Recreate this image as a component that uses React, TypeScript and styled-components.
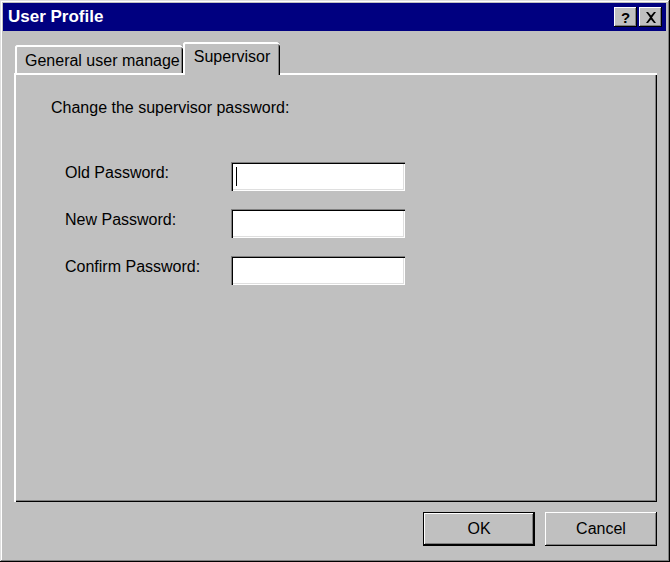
import React from 'react';
import styled, { createGlobalStyle } from 'styled-components';

const palette = {
  face: '#c0c0c0',
  light: '#dfdfdf',
  white: '#ffffff',
  shadow: '#808080',
  dark: '#000000',
  title: '#000080',
};

const GlobalStyle = createGlobalStyle`
  html, body {
    margin: 0;
    padding: 0;
    background: ${palette.face};
  }
  * {
    box-sizing: border-box;
  }
  body {
    font-family: "Liberation Sans", Arial, sans-serif;
    font-size: 15px;
    color: #000;
  }
`;

const fields = ['Old Password:', 'New Password:', 'Confirm Password:'];

const App: React.FC = () => (
  <>
    <GlobalStyle />
    <Window>
      <TitleBar>
        <Title>User Profile</Title>
        <TitleButtons>
          <TitleButton aria-label="help">
            <HelpGlyph>?</HelpGlyph>
          </TitleButton>
          <TitleButton aria-label="close">
            <svg width="12" height="11" viewBox="0 0 12 11">
              <path d="M1 0h2l3 3.5L9 0h2L7 5.5 11 11H9L6 7.5 3 11H1l4-5.5z" fill="#000" />
            </svg>
          </TitleButton>
        </TitleButtons>
      </TitleBar>
      <Body>
        <Tabs>
          <Tab>General user manage</Tab>
          <Tab active>Supervisor</Tab>
        </Tabs>
        <Panel>
          <Intro>Change the supervisor password:</Intro>
          <FieldGrid>
            {fields.map((label, i) => (
              <React.Fragment key={label}>
                <FieldLabel>{label}</FieldLabel>
                <TextBox>{i === 0 && <Caret />}</TextBox>
              </React.Fragment>
            ))}
          </FieldGrid>
        </Panel>
        <Actions>
          <PushButton isDefault>OK</PushButton>
          <PushButton>Cancel</PushButton>
        </Actions>
      </Body>
    </Window>
  </>
);

const Window = styled.div`
  width: 670px;
  height: 562px;
  display: flex;
  flex-direction: column;
  padding: 3px 4px 4px 3px;
  background: ${palette.face};
  box-shadow:
    inset -1px -1px ${palette.dark},
    inset 1px 1px ${palette.light},
    inset -2px -2px ${palette.shadow},
    inset 2px 2px ${palette.white};
`;

const TitleBar = styled.div`
  display: flex;
  align-items: center;
  justify-content: space-between;
  height: 28px;
  padding: 0 4px 0 5px;
  background: ${palette.title};
`;

const Title = styled.div`
  color: ${palette.white};
  font-weight: bold;
  font-size: 17px;
`;

const TitleButtons = styled.div`
  display: flex;
  gap: 2px;
`;

const TitleButton = styled.div`
  width: 23px;
  height: 20px;
  display: flex;
  align-items: center;
  justify-content: center;
  background: ${palette.face};
  box-shadow:
    inset -1px -1px ${palette.dark},
    inset 1px 1px ${palette.white},
    inset -2px -2px ${palette.shadow};
`;

const HelpGlyph = styled.span`
  font-weight: bold;
  font-size: 15px;
  line-height: 1;
`;

const Body = styled.div`
  flex: 1;
  display: flex;
  flex-direction: column;
  padding: 11px 9px 12px 11px;
`;

const Tabs = styled.div`
  display: flex;
  align-items: flex-end;
  padding-left: 1px;
  height: 31px;
  position: relative;
  z-index: 1;
`;

const Tab = styled.div<{ active?: boolean }>`
  height: ${({ active }) => (active ? '33px' : '28px')};
  margin-bottom: ${({ active }) => (active ? '-2px' : '0')};
  padding: ${({ active }) => (active ? '6px 10px 0 11px' : '7px 3px 0 10px')};
  background: ${palette.face};
  border-radius: 3px 3px 0 0;
  box-shadow:
    inset 2px 0 ${palette.white},
    inset 0 2px ${palette.white},
    inset -1px 0 ${palette.dark},
    inset -2px 0 ${palette.shadow};
  font-size: 16px;
  white-space: nowrap;
`;

const Panel = styled.div`
  flex: 1;
  display: flex;
  flex-direction: column;
  padding: 26px 20px 0 37px;
  background: ${palette.face};
  box-shadow:
    inset 2px 2px ${palette.white},
    inset -1px -1px ${palette.dark},
    inset -2px -2px ${palette.shadow};
`;

const Intro = styled.div`
  font-size: 16px;
  margin-bottom: 45px;
`;

const FieldGrid = styled.div`
  display: grid;
  grid-template-columns: 166px 174px;
  row-gap: 18px;
  padding-left: 14px;
  align-items: center;
`;

const FieldLabel = styled.div`
  font-size: 16px;
  margin-top: -8px;
`;

const TextBox = styled.div`
  position: relative;
  height: 29px;
  background: ${palette.white};
  box-shadow:
    inset 1px 1px ${palette.shadow},
    inset 2px 2px ${palette.dark},
    inset -1px -1px ${palette.white},
    inset -2px -2px ${palette.light};
`;

const Caret = styled.span`
  position: absolute;
  left: 5px;
  top: 5px;
  width: 1px;
  height: 19px;
  background: ${palette.dark};
`;

const Actions = styled.div`
  display: flex;
  justify-content: flex-end;
  gap: 10px;
  margin-top: 10px;
`;

const PushButton = styled.div<{ isDefault?: boolean }>`
  width: 112px;
  height: 34px;
  display: flex;
  align-items: center;
  justify-content: center;
  font-size: 16px;
  background: ${palette.face};
  box-shadow: ${({ isDefault }) =>
    isDefault
      ? `inset 0 0 0 1px ${palette.dark},
         inset -2px -2px ${palette.dark},
         inset 2px 2px ${palette.white},
         inset -3px -3px ${palette.shadow}`
      : `inset -1px -1px ${palette.dark},
         inset 1px 1px ${palette.white},
         inset -2px -2px ${palette.shadow}`};
`;

export default App;
